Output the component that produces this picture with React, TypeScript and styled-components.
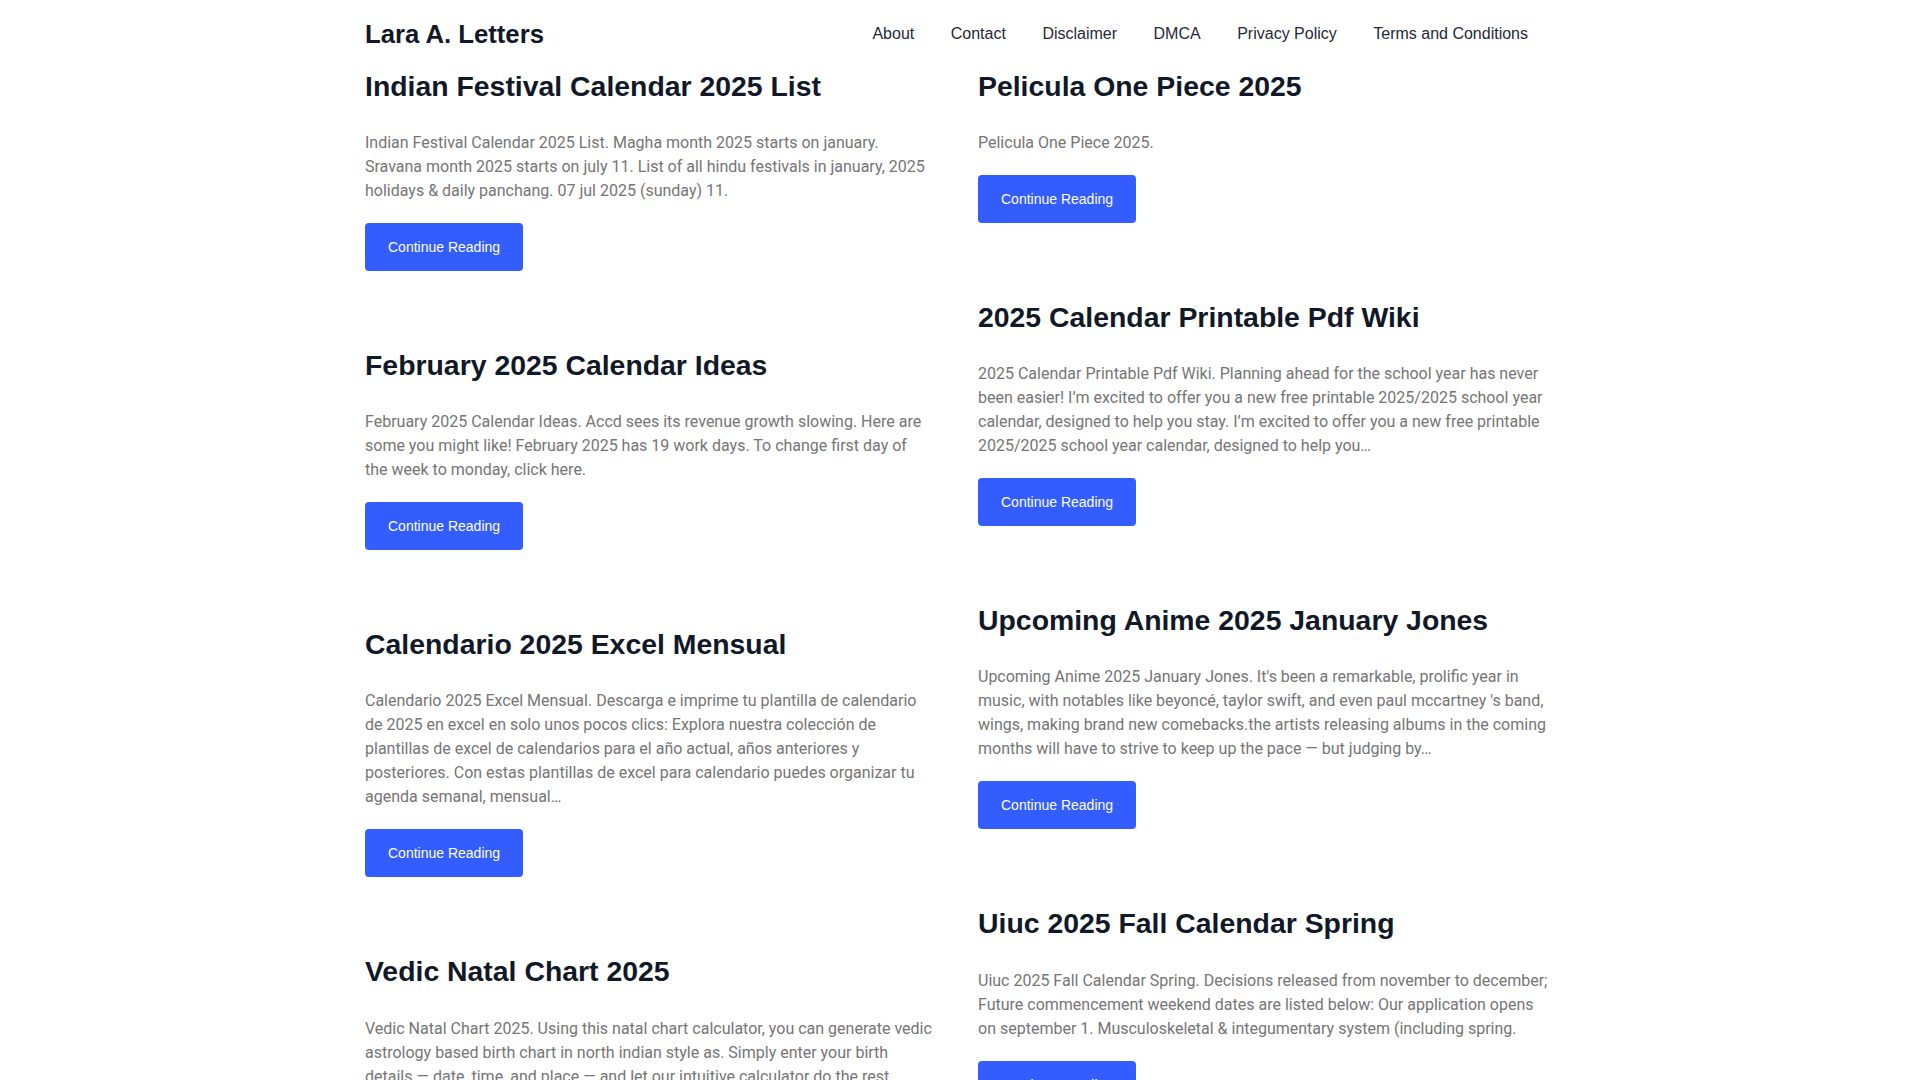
import styled, { createGlobalStyle } from 'styled-components'

type Post = {
    title: string
    excerpt: string
}

const leftPosts: Post[] = [
    {
        title: 'Indian Festival Calendar 2025 List',
        excerpt:
            'Indian Festival Calendar 2025 List. Magha month 2025 starts on january. Sravana month 2025 starts on july 11. List of all hindu festivals in january, 2025 holidays & daily panchang. 07 jul 2025 (sunday) 11.',
    },
    {
        title: 'February 2025 Calendar Ideas',
        excerpt:
            'February 2025 Calendar Ideas. Accd sees its revenue growth slowing. Here are some you might like! February 2025 has 19 work days. To change first day of the week to monday, click here.',
    },
    {
        title: 'Calendario 2025 Excel Mensual',
        excerpt:
            'Calendario 2025 Excel Mensual. Descarga e imprime tu plantilla de calendario de 2025 en excel en solo unos pocos clics: Explora nuestra colección de plantillas de excel de calendarios para el año actual, años anteriores y posteriores. Con estas plantillas de excel para calendario puedes organizar tu agenda semanal, mensual…',
    },
    {
        title: 'Vedic Natal Chart 2025',
        excerpt:
            'Vedic Natal Chart 2025. Using this natal chart calculator, you can generate vedic astrology based birth chart in north indian style as. Simply enter your birth details — date, time, and place — and let our intuitive calculator do the rest.',
    },
]

const rightPosts: Post[] = [
    {
        title: 'Pelicula One Piece 2025',
        excerpt: 'Pelicula One Piece 2025.',
    },
    {
        title: '2025 Calendar Printable Pdf Wiki',
        excerpt:
            '2025 Calendar Printable Pdf Wiki. Planning ahead for the school year has never been easier! I’m excited to offer you a new free printable 2025/2025 school year calendar, designed to help you stay. I’m excited to offer you a new free printable 2025/2025 school year calendar, designed to help you…',
    },
    {
        title: 'Upcoming Anime 2025 January Jones',
        excerpt:
            "Upcoming Anime 2025 January Jones. It's been a remarkable, prolific year in music, with notables like beyoncé, taylor swift, and even paul mccartney 's band, wings, making brand new comebacks.the artists releasing albums in the coming months will have to strive to keep up the pace — but judging by…",
    },
    {
        title: 'Uiuc 2025 Fall Calendar Spring',
        excerpt:
            'Uiuc 2025 Fall Calendar Spring. Decisions released from november to december; Future commencement weekend dates are listed below: Our application opens on september 1. Musculoskeletal & integumentary system (including spring.',
    },
]

const navLinks = ['About', 'Contact', 'Disclaimer', 'DMCA', 'Privacy Policy', 'Terms and Conditions']

function PostCard({ post }: { post: Post }) {
    return (
        <StyledPost>
            <StyledPostTitle href=''>{post.title}</StyledPostTitle>
            <StyledExcerpt>{post.excerpt}</StyledExcerpt>
            <StyledButton href=''>Continue Reading</StyledButton>
        </StyledPost>
    )
}

export default function App() {
    return (
        <>
            <GlobalStyle />
            <StyledContainer>
                <StyledHeader>
                    <StyledLogo href=''>Lara A. Letters</StyledLogo>
                    <StyledNav>
                        {navLinks.map((link) => (
                            <StyledNavLink key={link} href=''>
                                {link}
                            </StyledNavLink>
                        ))}
                    </StyledNav>
                </StyledHeader>
                <StyledMain>
                    <StyledColumn>
                        {leftPosts.map((post) => (
                            <PostCard key={post.title} post={post} />
                        ))}
                    </StyledColumn>
                    <StyledColumn>
                        {rightPosts.map((post) => (
                            <PostCard key={post.title} post={post} />
                        ))}
                    </StyledColumn>
                </StyledMain>
            </StyledContainer>
        </>
    )
}

const GlobalStyle = createGlobalStyle`
    html, body {
        margin: 0;
        padding: 0;
        background: #fff;
    }
    body {
        font-family: 'Liberation Sans', Arial, sans-serif;
        color: #111827;
    }
`

const StyledContainer = styled.div`
    max-width: 1190px;
    margin: 0 auto;
`

const StyledHeader = styled.header`
    display: flex;
    justify-content: space-between;
    align-items: center;
    height: 67px;
`

const StyledLogo = styled.a`
    font-size: 25.7px;
    line-height: 30px;
    font-weight: 700;
    color: #111827;
    text-decoration: none;
`

const StyledNav = styled.nav`
    display: flex;
    align-items: center;
    gap: 36.5px;
    padding-right: 27px;
`

const StyledNavLink = styled.a`
    font-size: 16px;
    color: #1f2937;
    text-decoration: none;
    :hover {
        text-decoration: underline;
    }
`

const StyledMain = styled.main`
    display: grid;
    grid-template-columns: 567.5px 577px;
    column-gap: 45.5px;
    align-items: start;
    padding-top: 1.5px;
`

const StyledColumn = styled.div`
    display: flex;
    flex-direction: column;
`

const StyledPost = styled.article`
    display: flex;
    flex-direction: column;
    align-items: flex-start;
    margin-bottom: 77px;
`

const StyledPostTitle = styled.a`
    font-size: 28.4px;
    line-height: 34px;
    font-weight: 700;
    color: #111827;
    text-decoration: none;
    margin-bottom: 28.3px;
`

const StyledExcerpt = styled.p`
    margin: 0 0 20px;
    font-family: Roboto, 'Liberation Sans', sans-serif;
    font-size: 16px;
    line-height: 24px;
    color: #757575;
`

const StyledButton = styled.a`
    display: inline-flex;
    align-items: center;
    justify-content: center;
    height: 48px;
    padding: 0 23px;
    border-radius: 4px;
    background-color: #335dff;
    color: #fff;
    font-size: 14px;
    text-decoration: none;
`
